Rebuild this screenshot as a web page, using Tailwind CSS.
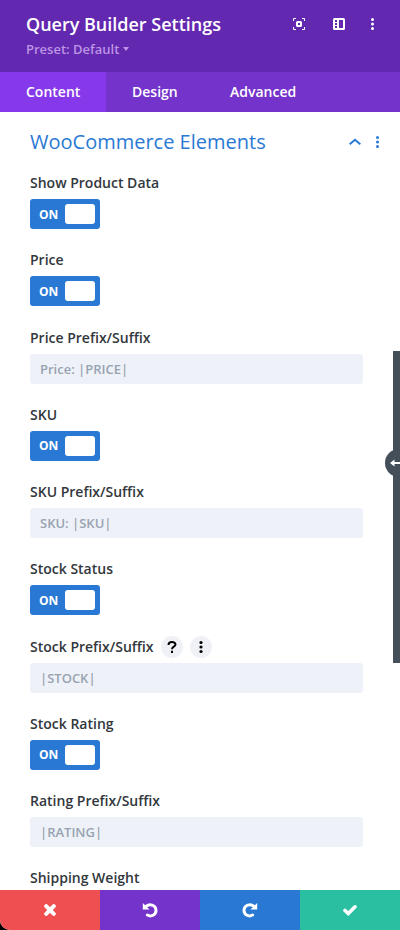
<!DOCTYPE html>
<html lang="en">

<head>
    <meta charset="UTF-8">
    <meta name="viewport" content="width=device-width, initial-scale=1.0">
    <title>Query Builder Settings</title>
    <script src="https://cdn.jsdelivr.net/npm/@tailwindcss/browser@4"></script>
    <style>
        body {
            font-family: 'Open Sans', sans-serif;
        }
    </style>
</head>

<body class="bg-black">
    <div class="relative flex flex-col w-[400px] h-[930px] overflow-hidden bg-white rounded-bl-[10px]">

        <header class="flex justify-between h-18 shrink-0 pl-[26px] pr-[21px] bg-[#6228b0]">
            <div class="pt-[11px]">
                <h1 class="text-[18px] leading-[26px] font-semibold tracking-[-0.01px] text-white whitespace-nowrap">Query Builder Settings</h1>
                <div class="flex items-center gap-1 text-[13px] leading-[24px] font-semibold text-[#bd94e6]">
                    Preset: Default
                    <svg class="w-[6px] h-[4px]" viewBox="0 0 6 4" fill="currentColor"><path d="M0 0h6L3 4z" /></svg>
                </div>
            </div>
            <div class="flex items-center h-12 text-white">
                <svg class="w-3 h-3 mr-7" viewBox="0 0 12 12" fill="none" stroke="currentColor">
                    <path d="M.5 3V.5H3M9 .5h2.500V3M11.500 9v2.500H9M3 11.500H.5V9" />
                    <rect x="4" y="4" width="4" height="4" rx=".5" stroke-width="2" />
                </svg>
                <svg class="w-3 h-3 mr-[22px]" viewBox="0 0 12 12">
                    <rect width="12" height="12" rx="1.500" fill="currentColor" />
                    <path d="M6 2h4v8H6zM2 2h2v2H2zM2 5h2v2H2zM2 8h2v2H2z" fill="#6228b0" />
                </svg>
                <svg class="w-3 h-3" viewBox="0 0 12 12" fill="currentColor">
                    <circle cx="5.500" cy="1.500" r="1.500" /><circle cx="5.500" cy="6" r="1.500" /><circle cx="5.500" cy="10.500" r="1.500" />
                </svg>
            </div>
        </header>

        <nav class="flex h-10 shrink-0 text-[14px] leading-[40px] font-semibold text-white bg-[#7433ca]">
            <a class="w-[106px] pl-[26px] bg-[#8639ea]">Content</a>
            <a class="w-[98px] pl-[26px]">Design</a>
            <a class="pl-[26px]">Advanced</a>
        </nav>

        <main class="flex-1 min-h-0 px-[30px] overflow-hidden">
            <div class="flex items-center justify-between h-[59px] mb-[2px] -mr-[14px] text-[#2979d4]">
                <h2 class="text-[20px] whitespace-nowrap">WooCommerce Elements</h2>
                <div class="flex items-center gap-[10px]">
                    <svg class="w-[14px] h-3" viewBox="0 0 14 12" fill="none" stroke="currentColor" stroke-width="2"><path d="M1.700 8.200 7 3.700l5.300 4.500" /></svg>
                    <svg class="w-3 h-3" viewBox="0 0 12 12" fill="currentColor">
                        <circle cx="5.500" cy="1.500" r="1.500" /><circle cx="5.500" cy="6" r="1.500" /><circle cx="5.500" cy="10.500" r="1.500" />
                    </svg>
                </div>
            </div>

            <div class="w-[333px] text-[14px] leading-5 font-semibold text-[#32373c]">
                <div class="h-[77.25px]">
                    <div class="mb-[6px]">Show Product Data</div>
                    <div class="flex items-center justify-between w-[70px] h-[30px] pl-[9px] pr-[5px] rounded-[3px] bg-[#2979d4]">
                        <span class="pt-px text-[12px] font-bold text-white">ON</span>
                        <span class="w-[30px] h-5 rounded-[3px] bg-white"></span>
                    </div>
                </div>
                <div class="h-[77.25px]">
                    <div class="mb-[6px]">Price</div>
                    <div class="flex items-center justify-between w-[70px] h-[30px] pl-[9px] pr-[5px] rounded-[3px] bg-[#2979d4]">
                        <span class="pt-px text-[12px] font-bold text-white">ON</span>
                        <span class="w-[30px] h-5 rounded-[3px] bg-white"></span>
                    </div>
                </div>
                <div class="h-[77.25px]">
                    <div class="mb-[6px]">Price Prefix/Suffix</div>
                    <input type="text" placeholder="Price: |PRICE|"
                        class="block w-full h-[30px] px-[10px] text-[13px] rounded-[3px] bg-[#eef2f8] placeholder:text-[#98a2b1]">
                </div>
                <div class="h-[77.25px]">
                    <div class="mb-[6px]">SKU</div>
                    <div class="flex items-center justify-between w-[70px] h-[30px] pl-[9px] pr-[5px] rounded-[3px] bg-[#2979d4]">
                        <span class="pt-px text-[12px] font-bold text-white">ON</span>
                        <span class="w-[30px] h-5 rounded-[3px] bg-white"></span>
                    </div>
                </div>
                <div class="h-[77.25px]">
                    <div class="mb-[6px]">SKU Prefix/Suffix</div>
                    <input type="text" placeholder="SKU: |SKU|"
                        class="block w-full h-[30px] px-[10px] text-[13px] rounded-[3px] bg-[#eef2f8] placeholder:text-[#98a2b1]">
                </div>
                <div class="h-[77.25px]">
                    <div class="mb-[6px]">Stock Status</div>
                    <div class="flex items-center justify-between w-[70px] h-[30px] pl-[9px] pr-[5px] rounded-[3px] bg-[#2979d4]">
                        <span class="pt-px text-[12px] font-bold text-white">ON</span>
                        <span class="w-[30px] h-5 rounded-[3px] bg-white"></span>
                    </div>
                </div>
                <div class="h-[77.25px]">
                    <div class="flex items-center h-5 mb-[6px]">
                        <span class="w-[131px]">Stock Prefix/Suffix</span>
                        <button class="flex items-center justify-center w-[22px] h-[22px] mr-[7px] rounded-full bg-[#eff1f6]">
                            <svg class="w-[10px] h-3" viewBox="0 0 10 12" fill="none" stroke="#000" stroke-width="2"><path d="M1.500 4C1.500.2 8.500.2 8.500 3.600 8.500 5.800 5 5.600 5 8.200M5 9.800V12" /></svg>
                        </button>
                        <button class="flex items-center justify-center w-[22px] h-[22px] rounded-full bg-[#eff1f6]">
                            <svg class="w-3 h-[14px]" viewBox="0 0 12 14" fill="#000">
                                <circle cx="6" cy="2.500" r="1.600" /><circle cx="6" cy="7" r="1.600" /><circle cx="6" cy="11.500" r="1.600" />
                            </svg>
                        </button>
                    </div>
                    <input type="text" placeholder="|STOCK|"
                        class="block w-full h-[30px] px-[10px] text-[13px] rounded-[3px] bg-[#eef2f8] placeholder:text-[#98a2b1]">
                </div>
                <div class="h-[77.25px]">
                    <div class="mb-[6px]">Stock Rating</div>
                    <div class="flex items-center justify-between w-[70px] h-[30px] pl-[9px] pr-[5px] rounded-[3px] bg-[#2979d4]">
                        <span class="pt-px text-[12px] font-bold text-white">ON</span>
                        <span class="w-[30px] h-5 rounded-[3px] bg-white"></span>
                    </div>
                </div>
                <div class="h-[77.25px]">
                    <div class="mb-[6px]">Rating Prefix/Suffix</div>
                    <input type="text" placeholder="|RATING|"
                        class="block w-full h-[30px] px-[10px] text-[13px] rounded-[3px] bg-[#eef2f8] placeholder:text-[#98a2b1]">
                </div>
                <div>Shipping Weight</div>
            </div>
        </main>

        <footer class="grid grid-cols-4 h-10 shrink-0 text-white">
            <button class="flex items-center justify-center bg-[#ef4f50]">
                <svg class="w-3 h-3" viewBox="0 0 12 12" stroke="currentColor" stroke-width="4" stroke-linecap="round"><path d="M2.200 2.200l7.600 7.600M9.800 2.200L2.200 9.800" /></svg>
            </button>
            <button class="flex items-center justify-center bg-[#7433ca]">
                <svg class="w-4 h-4" viewBox="0 0 16 16" fill="none" stroke="currentColor" stroke-width="3"><path d="M3.500 4.800C7 1 14 2.800 14 8.600c0 4.400-5 6.600-8.600 4.400" stroke-linecap="round" /><path d="M.8 1v6.500h6.700z" fill="currentColor" stroke="none" /></svg>
            </button>
            <button class="flex items-center justify-center bg-[#2979d4]">
                <svg class="w-4 h-4" viewBox="0 0 16 16" fill="none" stroke="currentColor" stroke-width="3"><path d="M12.500 4.800C9 1 2 2.800 2 8.600c0 4.400 5 6.600 8.600 4.400" stroke-linecap="round" /><path d="M15.200 1v6.500H8.500z" fill="currentColor" stroke="none" /></svg>
            </button>
            <button class="flex items-center justify-center bg-[#29bfa0]">
                <svg class="w-[14px] h-3" viewBox="0 0 14 12" fill="none" stroke="currentColor" stroke-width="3.600" stroke-linecap="round"><path d="M2 6.500l3.300 3L12 2.800" /></svg>
            </button>
        </footer>

        <!-- resize handle over the right edge -->
        <div class="absolute right-0 top-[351px] w-[7px] h-[312px] bg-[#444f5a]">
            <div class="absolute -left-2 top-[98px] w-7 h-7 rounded-full bg-[#444f5a]">
                <svg class="absolute left-[5px] top-2 w-3 h-3" viewBox="0 0 12 12" fill="#fff"><path d="M0 6l4.500-3.500V5H12v2H4.500v2.500z" /></svg>
            </div>
        </div>
    </div>
</body>

</html>
